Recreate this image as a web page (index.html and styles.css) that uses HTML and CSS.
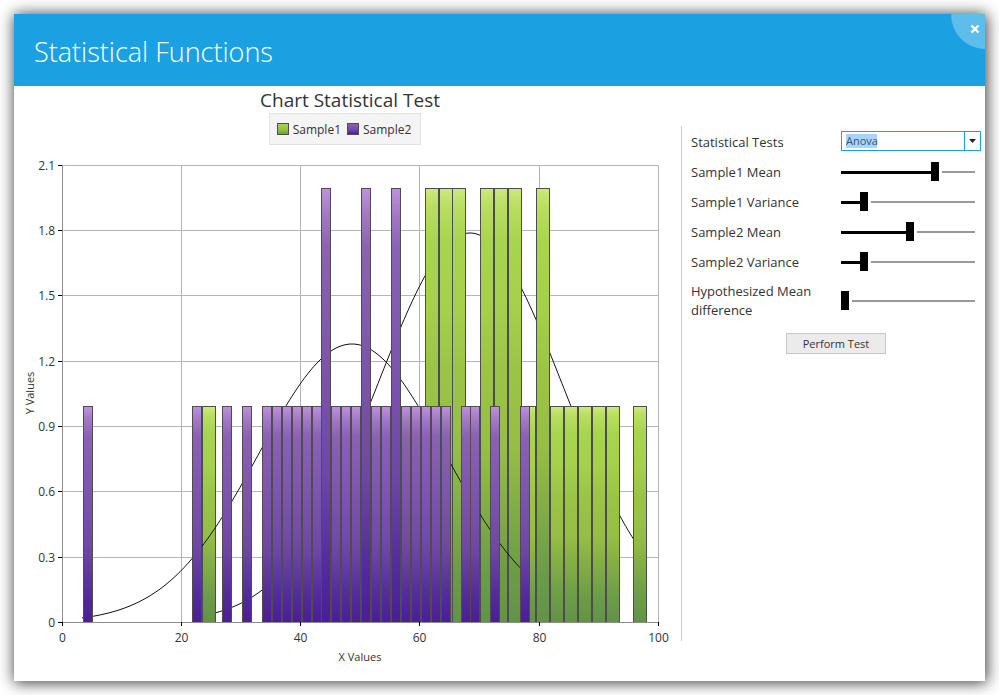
FILE: index.html
```html
<!DOCTYPE html>
<html lang="en">
<head>
<meta charset="utf-8">
<title>Statistical Functions</title>
<link rel="stylesheet" href="styles.css">
</head>
<body>
<main class="window">
  <header class="window-header">
    <h1>Statistical Functions</h1>
    <button class="close" type="button" aria-label="Close">
      <svg width="10" height="10" viewBox="0 0 10 10"><path d="M1.5 1.5L8.5 8.5M8.5 1.5L1.5 8.5" stroke="#fff" stroke-width="2.4" fill="none"/></svg>
    </button>
  </header>
  <div class="content">
    <section class="chart">
      <h2>Chart Statistical Test</h2>
      <ul class="legend">
        <li><span class="swatch green"></span>Sample1</li>
        <li><span class="swatch purple"></span>Sample2</li>
      </ul>
      <svg class="plot" viewBox="14 145 667 536" role="img" aria-label="Histogram of Sample1 and Sample2">
        <defs>
          <linearGradient id="greenFill" x1="0" y1="0" x2="0" y2="1">
            <stop offset="0" stop-color="#cbea7c"/>
            <stop offset=".04" stop-color="#bade62"/>
            <stop offset=".12" stop-color="#a8d550"/>
            <stop offset=".28" stop-color="#a4d04c"/>
            <stop offset=".42" stop-color="#9bc447"/>
            <stop offset=".6" stop-color="#96bd45"/>
            <stop offset=".88" stop-color="#6d9c47"/>
            <stop offset="1" stop-color="#639248"/>
          </linearGradient>
          <linearGradient id="purpleFill" x1="0" y1="0" x2="0" y2="1">
            <stop offset="0" stop-color="#be92dc"/>
            <stop offset=".06" stop-color="#a378c6"/>
            <stop offset=".14" stop-color="#8a61b4"/>
            <stop offset=".4" stop-color="#7d55ae"/>
            <stop offset=".65" stop-color="#6f48a6"/>
            <stop offset=".88" stop-color="#522a9a"/>
            <stop offset="1" stop-color="#4b1e94"/>
          </linearGradient>
        </defs>
        <g id="grid" class="grid"></g>
        <g id="series"></g>
        <g class="axis"><path d="M62.5 165V622.5H659"/></g>
        <g id="ticks" class="ticks"></g>
        <g id="labels" class="labels"></g>
        <text class="axis-title" x="360" y="661" text-anchor="middle">X Values</text>
        <text class="axis-title" transform="translate(34 393) rotate(-90)" text-anchor="middle">Y Values</text>
      </svg>
    </section>
    <form class="panel">
      <div class="row">
        <label for="test">Statistical Tests</label>
        <span class="combo">
          <select id="test"><option>Anova</option></select>
          <svg class="arrow" width="17" height="18" viewBox="0 0 17 18"><path d="M.5 0V18" stroke="#1ba1e2"/><path d="M5 7H12L8.5 11Z" fill="#222"/></svg>
        </span>
      </div>
      <div class="row"><label for="m1">Sample1 Mean</label><input id="m1" type="range" step="0.1" value="71.5" style="--p:.715"></div>
      <div class="row"><label for="v1">Sample1 Variance</label><input id="v1" type="range" step="0.1" value="15" style="--p:.15"></div>
      <div class="row"><label for="m2">Sample2 Mean</label><input id="m2" type="range" step="0.1" value="51.5" style="--p:.515"></div>
      <div class="row"><label for="v2">Sample2 Variance</label><input id="v2" type="range" step="0.1" value="15" style="--p:.15"></div>
      <div class="row tall"><label for="hd">Hypothesized Mean difference</label><input id="hd" type="range" step="0.1" value="0" style="--p:0"></div>
      <button class="perform" type="button">Perform Test</button>
    </form>
  </div>
</main>
<script src="script.js"></script>
</body>
</html>
```
FILE: styles.css
```css
* { box-sizing: border-box; }
body {
  margin: 0;
  padding: 14px;
  background: #fff;
  color: #333;
  font-family: "Open Sans", "Noto Sans", sans-serif;
  font-size: 13px;
}
.window {
  background: #fff;
  box-shadow: 1px 1px 14px 1px rgba(0, 0, 0, .75);
}
.window-header {
  position: relative;
  display: flex;
  align-items: center;
  height: 72px;
  padding: 2px 20px 0;
  background: #1ba1e2;
}
h1 {
  margin: 0;
  color: #fff;
  font-size: 27px;
  font-weight: 300;
}
.close {
  position: absolute;
  top: 0;
  right: 0;
  display: flex;
  justify-content: flex-end;
  width: 34px;
  height: 35px;
  padding: 10px 5px 0 0;
  border: 0;
  border-bottom-left-radius: 100%;
  background: #5fbdeb;
}
.content {
  display: grid;
  grid-template-columns: minmax(0, 1fr) 304px;
}
.chart {
  display: flex;
  flex-direction: column;
  align-items: center;
}
h2 {
  margin: 0;
  padding: 2px 0 0 5px;
  font-size: 19px;
  font-weight: 400;
  line-height: 25px;
}
.legend {
  display: flex;
  gap: 6px;
  height: 32px;
  margin: 0 5px 0 0;
  padding: 0 9px 0 7px;
  border: 1px solid #e2e2e2;
  background: #f4f4f4;
  list-style: none;
  font-size: 12px;
}
.legend li {
  display: flex;
  align-items: center;
  gap: 4px;
}
.swatch {
  width: 12px;
  height: 12px;
  border: 1px solid #4d4d4d;
}
.green { background: linear-gradient(#a8d550, #96bd45 60%, #6d9c47); }
.purple { background: linear-gradient(#8a61b4, #6f48a6 60%, #4b1e94); }
.plot {
  display: block;
  width: 100%;
  height: auto;
}
.grid path { stroke: #b5b5b5; fill: none; }
.axis path { stroke: #8c8c8c; fill: none; }
.ticks path { stroke: #000; fill: none; }
.bar { stroke: #4d4d4d; }
.bar.s1 { fill: url(#greenFill); }
.bar.s2 { fill: url(#purpleFill); }
.curve { stroke: #111; fill: none; }
.labels { fill: #333; font-size: 12px; }
.axis-title { fill: #333; font-size: 11px; }
.panel {
  margin: 40px 0;
  padding: 0 4px 0 9px;
  border-left: 1px solid #ccc;
}
.row {
  display: grid;
  grid-template-columns: 150px 1fr;
  align-items: center;
  min-height: 30px;
  line-height: 19px;
}
.row label { padding-top: 2px; }
.row.tall { min-height: 48px; }
.combo { position: relative; display: flex; }
select {
  width: 100%;
  height: 20px;
  padding: 0 20px 0 4px;
  border: 1px solid #1ba1e2;
  border-radius: 0;
  appearance: none;
  background: linear-gradient(#aad4ff, #aad4ff) 4px 2px / 31px 14px no-repeat #fff;
  color: #2f5578;
  font: 11px/18px "Open Sans", sans-serif;
}
.arrow {
  position: absolute;
  top: 1px;
  right: 0;
  pointer-events: none;
}
input[type="range"] {
  --edge: calc(var(--p) * (100% - 8px) + 8px);
  width: calc(100% - 6px);
  height: 19px;
  margin: 0;
  appearance: none;
  background:
    linear-gradient(90deg, #000 var(--edge), transparent var(--edge)) 0 9px / 100% 3px no-repeat,
    linear-gradient(90deg, transparent calc(var(--edge) + 3px), #999 calc(var(--edge) + 3px)) 0 9px / 100% 2px no-repeat;
}
input[type="range"]::-webkit-slider-thumb {
  width: 8px;
  height: 19px;
  border: 0;
  border-radius: 0;
  appearance: none;
  background: #000;
}
.perform {
  display: block;
  width: 100px;
  height: 21px;
  margin: 9px 0 0 95px;
  padding: 0;
  border: 1px solid #c8c8c8;
  background: #ebebeb;
  color: #333;
  font: 11px/17px "Open Sans", sans-serif;
}
```
FILE: script.js
```js
const NS = 'http://www.w3.org/2000/svg';
const BASE = 622;
const TOPS = { 1: 406, 2: 188 };

function add(parent, name, attrs, text) {
  const el = document.createElementNS(NS, name);
  for (const key in attrs) el.setAttribute(key, attrs[key]);
  if (text !== undefined) el.textContent = text;
  parent.appendChild(el);
}

const grid = document.getElementById('grid');
const ticks = document.getElementById('ticks');
const labels = document.getElementById('labels');
for (let i = 0; i <= 5; i++) {
  const x = Math.floor(62 + i * 119.25) + 0.5;
  add(grid, 'path', { d: `M${x} 165V622` });
  add(ticks, 'path', { d: `M${x} 622V626` });
  add(labels, 'text', { x, y: 642, 'text-anchor': 'middle' }, i * 20);
}
for (let i = 0; i <= 7; i++) {
  const y = Math.round(622 - i * 65.31) + 0.5;
  add(grid, 'path', { d: `M62 ${y}H659` });
  add(ticks, 'path', { d: `M58 ${y}H62` });
  add(labels, 'text', { x: 55, y: y + 4, 'text-anchor': 'end' }, i ? String(Math.round(i * 3) / 10) : '0');
}

const series = document.getElementById('series');
function curve(from, to, mean, sigma, peak) {
  let d = '';
  for (let x = from; x <= to; x += 2) {
    const y = BASE - peak * Math.exp(-((x - mean) ** 2) / (2 * sigma * sigma));
    d += (d ? 'L' : 'M') + x + ' ' + y.toFixed(2);
  }
  add(series, 'path', { class: 'curve', d });
}
function bars(cls, start, step, width, counts) {
  for (const [index, count] of counts) {
    const x = Math.round(start + index * step);
    const y = TOPS[count];
    add(series, 'rect', { class: 'bar ' + cls, x: x + 0.5, y: y + 0.5, width: width - 1, height: BASE - y });
  }
}

curve(208, 640, 470, 93, 389);
bars('s1', 202, 13.915, 14, [
  [0, 1], [16, 2], [17, 2], [18, 2], [20, 2], [21, 2], [22, 2], [23, 1],
  [24, 2], [25, 1], [26, 1], [27, 1], [28, 1], [29, 1], [31, 1]
]);
curve(82, 524, 352, 93, 278);
const sample2 = [[0, 1], [11, 1], [14, 1], [16, 1]];
for (let i = 18; i <= 36; i++) sample2.push([i, [24, 28, 31].includes(i) ? 2 : 1]);
sample2.push([38, 1], [39, 1], [41, 1], [44, 1]);
bars('s2', 83.02, 9.935, 10, sample2);

document.querySelectorAll('input[type="range"]').forEach(input => {
  input.addEventListener('input', () => input.style.setProperty('--p', input.value / 100));
});
```
